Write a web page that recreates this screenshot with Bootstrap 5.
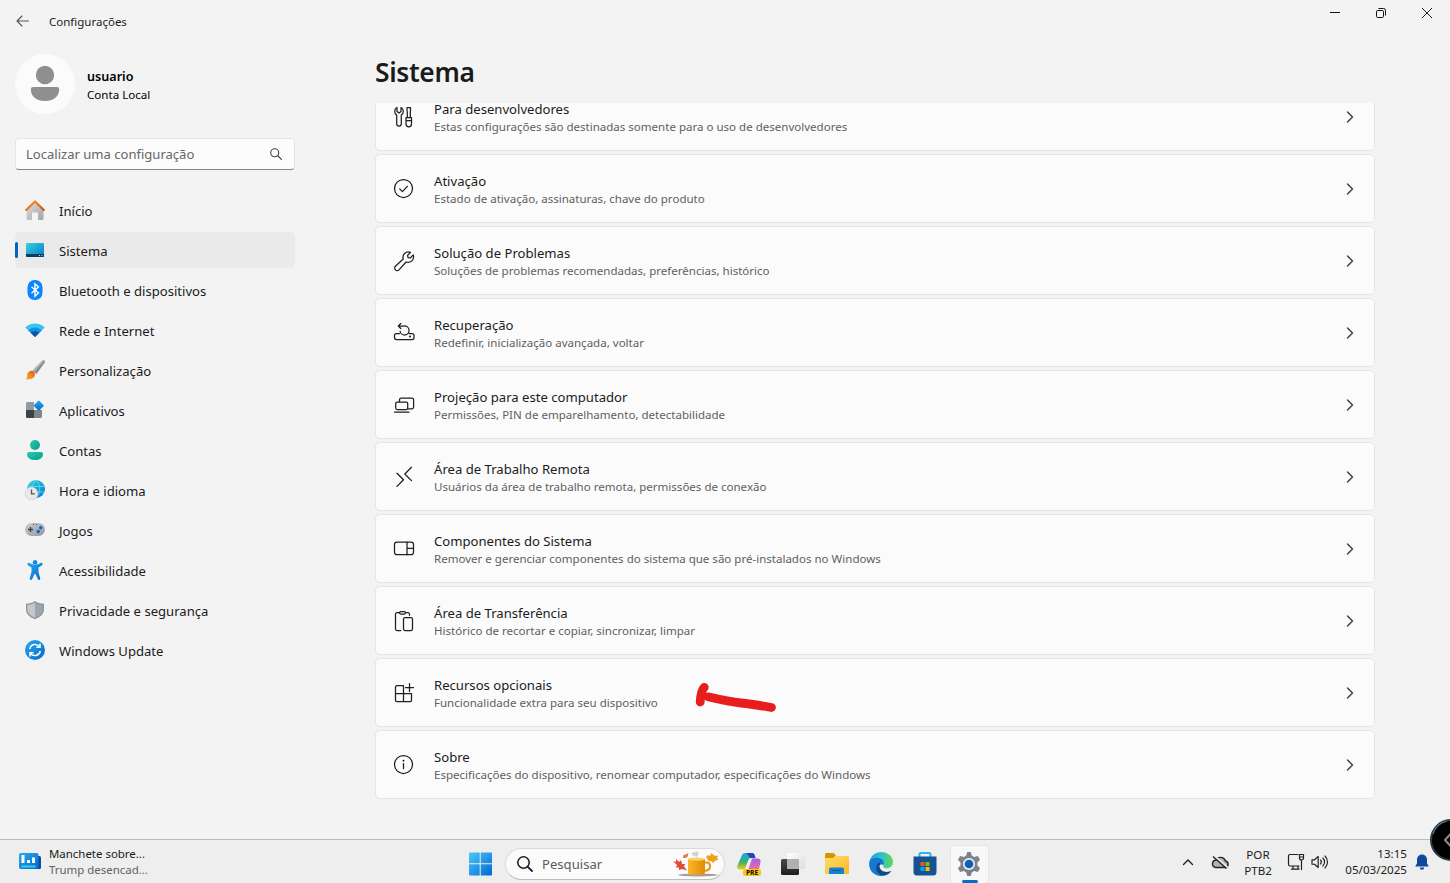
<!DOCTYPE html>
<html lang="pt-BR">
<head>
<meta charset="utf-8">
<title>Configurações</title>
<link href="https://cdn.jsdelivr.net/npm/bootstrap@5.3.0/dist/css/bootstrap.min.css" rel="stylesheet">
<style>
body{font-family:"Noto Sans","Open Sans",sans-serif;background:#f3f3f3;color:#1b1b1b;width:1450px;height:883px;overflow:hidden;font-size:13.12px;line-height:20px}
svg{display:block;flex:none;overflow:visible}
.ln{fill:none;stroke:#1f1f1f;stroke-width:1.25;stroke-linecap:round;stroke-linejoin:round}
.winbar{height:44px;padding-left:16px}
.wintitle{font-size:11.5px;margin-left:19px}
.winctl{width:46px;height:26px}
.side{width:375px;padding:10px 0 0 15px}
.pic{width:60px;height:60px;background:#fbfbfb}
.who{font-size:12.6px;line-height:18px;color:#000}
.who b{font-weight:600}
.who small{font-size:11.6px;display:block}
.find{width:280px;height:32px;margin-top:24px;border:1px solid #e4e4e4;border-bottom-color:#868686;border-radius:4px;background:#fcfcfc;color:#666;padding:0 12px 0 10px;font-size:13.05px}
.menu{width:280px;gap:4px;margin-top:22px}
.menu .nav-link{height:36px;padding:0 0 0 10px;color:#1b1b1b;border-radius:5px;gap:14px;font-size:13.1px}
.menu .nav-link span{padding-top:1px}
.menu .nav-link.active{background:#eaeaea;position:relative}
.menu .nav-link.active::before{content:"";position:absolute;left:0;top:10px;width:3px;height:16px;border-radius:2px;background:#0067c0}
.pagetitle{font-size:26.4px;font-weight:600;letter-spacing:-.35px;line-height:36px;height:49px;margin:0}
.content{width:1000px;padding-top:10px}
.clip{overflow:hidden}
.stack{gap:3px;margin-top:-21px}
.opt{height:69px;border:1px solid #e5e5e5;border-radius:5px;background:#fbfbfb;color:inherit;padding:0 20px 0 17px}
.opt .lbl{margin-left:19px}
.opt .lbl small{display:block;font-size:11.54px;line-height:16px;color:#5f5f5f}
.mark-red{position:absolute;left:314px;top:21px}
.taskbar{height:44px;border-top:1px solid #bcbcbc;background:#eee;display:grid;grid-template-columns:468px 524px 1fr}
.news{padding-left:18px;gap:8px;font-size:11.45px;line-height:16px}
.apps>*{position:static}
.pill{width:220px;height:32px;margin:0 2px 0 13px;border:1px solid #d9d9d9;border-bottom-color:#bdbdbd;border-radius:16px;background:#fbfbfb;color:#5b5b5b;padding:0 5px 0 11px}
.tile{width:44px;height:44px}
.tile.on div{width:39px;height:39px;border-radius:4px;background:#f8f8f8;border:1px solid #e6e6e6;position:relative}
.tile.on div::after{content:"";position:absolute;left:11px;bottom:0;width:16px;height:3px;border-radius:2px;background:#0a6cc8}
.tray{padding-right:20px;font-size:11.6px;line-height:16px}
.bubble{position:absolute;left:1430px;top:819px}
</style>
</head>
<body class="d-flex flex-column">
<svg width="0" height="0" class="position-absolute">
<defs>
<linearGradient id="gOr" x1="0" y1="0" x2="1" y2="1"><stop offset="0" stop-color="#f99a1c"/><stop offset="1" stop-color="#d2500f"/></linearGradient>
<linearGradient id="gBr" x1="1" y1="0" x2="0" y2="1"><stop offset="0" stop-color="#e8590c"/><stop offset="1" stop-color="#ffb22e"/></linearGradient>
<linearGradient id="gGy" x1="0" y1="0" x2="1" y2="1"><stop offset="0" stop-color="#dedede"/><stop offset="1" stop-color="#a5a5a8"/></linearGradient>
<linearGradient id="gPad" x1="0" y1="0" x2="1" y2="1"><stop offset="0" stop-color="#c9ced3"/><stop offset="1" stop-color="#8f979f"/></linearGradient>
<linearGradient id="gSys" x1="0" y1="0" x2="1" y2="1"><stop offset="0" stop-color="#33d6dd"/><stop offset="1" stop-color="#0b74cc"/></linearGradient>
<linearGradient id="gBl" x1="0" y1="0" x2="1" y2="1"><stop offset="0" stop-color="#28aaec"/><stop offset="1" stop-color="#0469cf"/></linearGradient>
<linearGradient id="gTe" x1="0" y1="0" x2="1" y2="1"><stop offset="0" stop-color="#29ccb0"/><stop offset="1" stop-color="#0d9c86"/></linearGradient>
<linearGradient id="gWin" x1="0" y1="0" x2="1" y2="1"><stop offset="0" stop-color="#4cc9fb"/><stop offset="1" stop-color="#0068d0"/></linearGradient>
<linearGradient id="gDk" x1="0" y1="0" x2="0" y2="1"><stop offset="0" stop-color="#4a4a4a"/><stop offset="1" stop-color="#1d1d1d"/></linearGradient>
<linearGradient id="gLt" x1="0" y1="0" x2="1" y2="1"><stop offset="0" stop-color="#ffffff"/><stop offset="1" stop-color="#dcdcdc"/></linearGradient>
<linearGradient id="gFo" x1="0" y1="0" x2="1" y2="1"><stop offset="0" stop-color="#ffdd6c"/><stop offset="1" stop-color="#f8b91f"/></linearGradient>
<linearGradient id="gEd" x1="0" y1="0" x2="1" y2="0"><stop offset="0" stop-color="#1c9de0"/><stop offset=".5" stop-color="#2cc3d2"/><stop offset="1" stop-color="#6ad64a"/></linearGradient>
<linearGradient id="gMug" x1="0" y1="0" x2="1" y2="0"><stop offset="0" stop-color="#f8b62a"/><stop offset="1" stop-color="#e58b0a"/></linearGradient>
<linearGradient id="gC1" x1="0" y1="0" x2="0" y2="1"><stop offset="0" stop-color="#1fa1ec"/><stop offset=".55" stop-color="#37b36a"/><stop offset="1" stop-color="#f6c81d"/></linearGradient>
<linearGradient id="gC2" x1="0" y1="0" x2="0" y2="1"><stop offset="0" stop-color="#a45df0"/><stop offset="1" stop-color="#f5718b"/></linearGradient>
<symbol id="chev" viewBox="0 0 8 12"><path class="ln" d="M1.500 1 6.500 6 1.500 11" style="stroke:#3c3c3c;stroke-width:1.400"/></symbol>
</defs>
</svg>

<header class="winbar d-flex align-items-center">
<svg width="14" height="12" viewBox="0 0 14 12" style="margin-top:-2px"><path class="ln" d="M12.500 6H1M6 1 1 6l5 5" style="stroke:#555;stroke-width:1.100"/></svg>
<span class="wintitle">Configurações</span>
<div class="ms-auto d-flex align-self-start">
<div class="winctl d-flex align-items-center justify-content-center"><svg width="10" height="10"><path d="M0 4.500h10" stroke="#111"/></svg></div>
<div class="winctl d-flex align-items-center justify-content-center"><svg width="10" height="10" fill="none" stroke="#111"><rect x=".5" y="2.500" width="7" height="7" rx="1.200"/><path d="M2.500.5h5a2 2 0 0 1 2 2v5"/></svg></div>
<div class="winctl d-flex align-items-center justify-content-center"><svg width="10" height="10"><path d="M0 0 10 10M10 0 0 10" stroke="#222"/></svg></div>
</div>
</header>

<div class="d-flex flex-grow-1 overflow-hidden">
<aside class="side flex-shrink-0">
<div class="d-flex align-items-center">
<div class="pic rounded-circle d-flex justify-content-center"><svg width="28" height="36" style="margin-top:12px" fill="#8f8f8f"><circle cx="14" cy="9" r="9.200"/><path d="M2 21h24a2.200 2.200 0 0 1 2.200 2.200c0 2.800-.8 5.500-3 7.800-2.600 2.700-6 4-11.200 4s-8.600-1.300-11.200-4c-2.200-2.300-3-5-3-7.800A2.200 2.200 0 0 1 2 21z"/></svg></div>
<div class="who ms-2 ps-1 pt-1"><b>usuario</b><small>Conta Local</small></div>
</div>
<div class="find d-flex align-items-center justify-content-between"><span>Localizar uma configuração</span><svg width="12" height="12"><circle cx="4.700" cy="4.700" r="4" class="ln" style="stroke:#444;stroke-width:1.100"/><path class="ln" d="m7.800 7.800 3.600 3.600" style="stroke:#444"/></svg></div>
<nav class="nav flex-column menu">
<a class="nav-link d-flex align-items-center"><svg width="20" height="20"><path d="M1.500 9 10 2l8.500 7v9.500q0 1.500-1.500 1.500h-4v-7.500H7V20H3q-1.500 0-1.500-1.500z" fill="url(#gGy)"/><path d="M1.200 10 10 1.500 18.800 10" fill="none" stroke="url(#gOr)" stroke-width="2.300" stroke-linecap="round" stroke-linejoin="round"/></svg><span>Início</span></a>
<a class="nav-link active d-flex align-items-center"><svg width="20" height="20"><rect x="1" y="3" width="18" height="14" rx="1.200" fill="url(#gSys)"/><path d="M1 14h18v2q0 1-1 1H2q-1 0-1-1z" fill="#0b3f62"/><path d="M14 15.500h1M16.500 15.500h1" stroke="#bfe3f3"/></svg><span>Sistema</span></a>
<a class="nav-link d-flex align-items-center"><svg width="20" height="20"><rect x="2.500" y="0" width="15" height="20" rx="7.200" fill="#0a84ff"/><path d="m6.500 6.800 7 6.200-3.500 3.200V3.800l3.500 3.200-7 6.200" fill="none" stroke="#fff" stroke-width="1.400"/></svg><span>Bluetooth e dispositivos</span></a>
<a class="nav-link d-flex align-items-center"><svg width="20" height="20"><path d="M.3 7.500C5.500 2 14.500 2 19.700 7.500L10 17z" fill="#35c5f1"/><path d="M3.300 10.400c3.800-4 9.600-4 13.400 0L10 17z" fill="#1492df"/><path d="M5.900 13c2.300-2.400 5.900-2.400 8.200 0L10 17z" fill="#0b55a5"/></svg><span>Rede e Internet</span></a>
<a class="nav-link d-flex align-items-center"><svg width="20" height="20"><path d="M19.500.6c.8.900.3 2-.4 3L11.500 14l-4-3.500L16.500 1.500c1-1 2.200-1.600 3-.9z" fill="#858c94"/><path d="M19.300.6 9 12 7.500 10.500 16.500 1.500c1-1 2-1.600 2.800-.9z" fill="#b3b9bf"/><path d="M6 10.800c2.500-.3 4.300 1.500 4 4C9.600 18 6 20 .5 19.400c1.800-1.200 1.300-2.400 1.800-4.900.4-2 1.700-3.500 3.700-3.700z" fill="url(#gBr)"/></svg><span>Personalização</span></a>
<a class="nav-link d-flex align-items-center"><svg width="20" height="20"><path d="M1 3.500Q1 2 2.500 2H9v8H1z" fill="#9299a1"/><path d="M1 10h8v8H2.500Q1 18 1 16.500z" fill="#3d4248"/><path d="M9 10h8v6.500q0 1.500-1.500 1.500H9z" fill="#7d848c"/><rect x="10" y="1.800" width="7.600" height="7.600" rx="1" transform="rotate(45 13.800 5.600)" fill="url(#gBl)"/></svg><span>Aplicativos</span></a>
<a class="nav-link d-flex align-items-center"><svg width="20" height="20" fill="url(#gTe)"><circle cx="10" cy="5" r="5"/><path d="M4 12h12q2 0 2 2c0 4-3.500 6-8 6s-8-2-8-6q0-2 2-2z"/></svg><span>Contas</span></a>
<a class="nav-link d-flex align-items-center"><svg width="20" height="20"><circle cx="11" cy="9" r="9" fill="url(#gSys)"/><path d="M2.500 6.500h17M3 12h16.500M11 0C6 5 6 13 11 18M11 0c5 5 5 13 0 18" fill="none" stroke="#5bdcf4" stroke-width=".9"/><circle cx="6.500" cy="13.500" r="6.400" fill="#e9e9ea" stroke="#bfc2c6" stroke-width=".5"/><path d="M6.500 9.500v4.300h3.300" fill="none" stroke="#555" stroke-width="1.300"/></svg><span>Hora e idioma</span></a>
<a class="nav-link d-flex align-items-center"><svg width="20" height="20"><rect x="0" y="3" width="20" height="13" rx="6.500" fill="url(#gPad)"/><path d="M3 9.500h5M5.500 7v5" stroke="#3e4348" stroke-width="1.300"/><circle cx="15.700" cy="7.700" r="1.700" fill="#0c66bd"/><circle cx="13.300" cy="11.500" r="1.700" fill="#0c66bd"/><path d="M8 4.500h1M11 4.500h1" stroke="#555"/></svg><span>Jogos</span></a>
<a class="nav-link d-flex align-items-center"><svg width="20" height="20" fill="url(#gBl)"><circle cx="10" cy="2.300" r="2.300"/><path d="M2.500 3.500c.5-.9 1.300-.7 2-.4 3.500 2 7.500 2 11 0 .7-.3 1.500-.5 2 .4.400.8 0 1.500-.7 1.900L13.500 7.500V12l1.700 6.300c.2.800 0 1.500-.8 1.700-.8.100-1.300-.3-1.600-1L10.500 14h-1L7.200 19c-.3.700-.8 1.100-1.600 1-.8-.2-1-.9-.8-1.700L6.500 12V7.500L3.200 5.400c-.7-.4-1.100-1.100-.7-1.900z"/></svg><span>Acessibilidade</span></a>
<a class="nav-link d-flex align-items-center"><svg width="20" height="20"><path d="M10 1c2.500 1.800 5.500 2.500 9 2.700V9c0 5-3.500 8-9 10.200C4.500 17 1 14 1 9V3.700C4.500 3.500 7.500 2.800 10 1z" fill="#8d939a"/><path d="M10 2.500V17.700C5.500 15.800 2.300 13 2.300 9V4.900C5.300 4.600 7.700 4 10 2.500z" fill="#c3c8cd"/><path d="M10 2.500c2.300 1.500 4.700 2.100 7.700 2.400V9c0 4-3.200 6.800-7.700 8.700z" fill="#9fa5ac"/></svg><span>Privacidade e segurança</span></a>
<a class="nav-link d-flex align-items-center"><svg width="20" height="20"><circle cx="10" cy="10" r="10" fill="url(#gBl)"/><path d="M4.700 9A5.500 5.500 0 0 1 14.500 6.600M15.300 11A5.500 5.500 0 0 1 5.500 13.400M15 3.500V7.200H11.300M5 16.500V12.800H8.700" fill="none" stroke="#fff" stroke-width="1.500"/></svg><span>Windows Update</span></a>
</nav>
</aside>

<main class="content">
<h1 class="pagetitle">Sistema</h1>
<div class="clip">
<div class="stack d-flex flex-column">
<a class="opt text-decoration-none d-flex align-items-center"><svg width="22" height="22"><g class="ln"><path d="M4 1.500v4L6 7l2-1.500v-4c1.500.8 2.300 2.200 2.300 3.700 0 1.700-.8 3-2 3.900v8.700a2.300 2.300 0 0 1-4.600 0V9.100C2.500 8.200 1.700 6.900 1.700 5.200c0-1.500.8-2.900 2.300-3.700z"/><path d="M14 1.500h3.500v3l-.2 1.500v5.500h-3V6L14 4.500zM13 11.500h5.500v6.600a2.750 2.750 0 0 1-5.500 0zM13 14.500h5.500"/></g></svg><div class="lbl">Para desenvolvedores<small>Estas configurações são destinadas somente para o uso de desenvolvedores</small></div><svg class="ms-auto" width="8" height="12"><use href="#chev"/></svg></a>
<a class="opt text-decoration-none d-flex align-items-center"><svg width="22" height="22"><g class="ln"><circle cx="10.500" cy="10.500" r="9"/><path d="m6.700 10.900 2.700 2.700 5-5.200"/></g></svg><div class="lbl">Ativação<small>Estado de ativação, assinaturas, chave do produto</small></div><svg class="ms-auto" width="8" height="12"><use href="#chev"/></svg></a>
<a class="opt text-decoration-none d-flex align-items-center"><svg width="22" height="22"><path class="ln" d="M17.500 2.300 14.600 5.400l.4 2.200 2.200.4 3.100-3.100c1.100 3.500-1.200 7.500-5 7.500-.8 0-1.500-.1-2.200-.4L6 19.900a2.500 2.500 0 0 1-3.600-3.600L10.200 9C8.900 4.900 12.800.5 17.500 2.300z"/></svg><div class="lbl">Solução de Problemas<small>Soluções de problemas recomendadas, preferências, histórico</small></div><svg class="ms-auto" width="8" height="12"><use href="#chev"/></svg></a>
<a class="opt text-decoration-none d-flex align-items-center"><svg width="22" height="22"><g class="ln"><path d="M6.500 11.500H3.500a2 2 0 0 0-2 2V15.500a2 2 0 0 0 2 2H19a2 2 0 0 0 2-2v-2a2 2 0 0 0-2-2H16"/><path d="M5.300 4H11.500a4.500 4.500 0 1 1-4.400 5.300M7.800 1.500 5.300 4 7.800 6.500"/></g><circle cx="17" cy="14.500" r=".9"/></svg><div class="lbl">Recuperação<small>Redefinir, inicialização avançada, voltar</small></div><svg class="ms-auto" width="8" height="12"><use href="#chev"/></svg></a>
<a class="opt text-decoration-none d-flex align-items-center"><svg width="22" height="22"><g class="ln"><rect x="2.700" y="8" width="12" height="7.500" rx="1.500"/><path d="M6.500 7.700V5.800A1.800 1.800 0 0 1 8.300 4H18.800A1.800 1.800 0 0 1 20.600 5.800v7.300a1.800 1.800 0 0 1-1.800 1.800H15M1.500 18.200H16"/></g></svg><div class="lbl">Projeção para este computador<small>Permissões, PIN de emparelhamento, detectabilidade</small></div><svg class="ms-auto" width="8" height="12"><use href="#chev"/></svg></a>
<a class="opt text-decoration-none d-flex align-items-center"><svg width="22" height="22"><path class="ln" d="m4 7.300 6.500 6.500L4 20.400M18.500 1.300 11.800 8l6.700 6.600"/></svg><div class="lbl">Área de Trabalho Remota<small>Usuários da área de trabalho remota, permissões de conexão</small></div><svg class="ms-auto" width="8" height="12"><use href="#chev"/></svg></a>
<a class="opt text-decoration-none d-flex align-items-center"><svg width="22" height="22"><g class="ln"><rect x="1.500" y="4" width="19" height="12.700" rx="2.500"/><path d="M14 4V16.700M14 10.300h6.500"/></g></svg><div class="lbl">Componentes do Sistema<small>Remover e gerenciar componentes do sistema que são pré-instalados no Windows</small></div><svg class="ms-auto" width="8" height="12"><use href="#chev"/></svg></a>
<a class="opt text-decoration-none d-flex align-items-center"><svg width="22" height="22"><g class="ln"><rect x="6.500" y="1.500" width="6" height="2.500" rx="1.200"/><path d="M6.200 2.700H4A1.500 1.500 0 0 0 2.500 4.200V19A1.500 1.500 0 0 0 4 20.500H7.700M12.700 2.700H15A1.500 1.500 0 0 1 16.500 4.200V5.300"/><rect x="10.500" y="7.500" width="9" height="13" rx="1.400"/></g></svg><div class="lbl">Área de Transferência<small>Histórico de recortar e copiar, sincronizar, limpar</small></div><svg class="ms-auto" width="8" height="12"><use href="#chev"/></svg></a>
<a class="opt text-decoration-none d-flex align-items-center position-relative"><svg width="22" height="22"><g class="ln"><path d="M10.500 3.700H3.800A1.300 1.300 0 0 0 2.500 5v13.200a1.300 1.300 0 0 0 1.300 1.300H17.200a1.300 1.300 0 0 0 1.300-1.300V11.500H2.500M10.500 3.700V19.500M16.500 1.500v8M12.500 5.500h8"/></g></svg><div class="lbl">Recursos opcionais<small>Funcionalidade extra para seu dispositivo</small></div><svg class="ms-auto" width="8" height="12"><use href="#chev"/></svg>
<svg class="mark-red" width="92" height="34" viewBox="690 680 92 34"><path d="M704.300 687.300Q700.700 691 700.200 702M708 696.800Q730 702 741 703T771.500 707.500" fill="none" stroke="#e81e1e" stroke-width="8.800" stroke-linecap="round" stroke-linejoin="round"/></svg></a>
<a class="opt text-decoration-none d-flex align-items-center"><svg width="22" height="22"><g class="ln"><circle cx="10.500" cy="10.500" r="9"/><path d="M10.500 9.500v5.200"/></g><circle cx="10.500" cy="6.700" r=".9"/></svg><div class="lbl">Sobre<small>Especificações do dispositivo, renomear computador, especificações do Windows</small></div><svg class="ms-auto" width="8" height="12"><use href="#chev"/></svg></a>
</div>
</div>
</main>
</div>

<footer class="taskbar">
<div class="news d-flex align-items-center"><svg width="23" height="18"><rect x="11" y="3" width="12" height="13" rx="1.500" fill="#0c4d9b"/><rect x="1" y="0" width="19.500" height="16" rx="2" fill="url(#gBl)"/><path d="M3.500 13.500h14" stroke="#26d6ef" stroke-width="2"/><path d="M5 2v8M10.500 7v3M15.500 4.500V10" stroke="#fff" stroke-width="3"/></svg><div>Manchete sobre...<br><span style="color:#626262">Trump desencad...</span></div></div>
<div class="apps d-flex align-items-center pt-0 mt-1" style="height:40px">
<svg width="24" height="24" fill="url(#gWin)"><path d="M2 .5h9.700v10.700H1V1.500a1 1 0 0 1 1-1zM12.700.5h10.300a1 1 0 0 1 1 1v9.700H12.700zM1 12.200h10.700V23.500H2a1 1 0 0 1-1-1zM12.700 12.200H24V22.500a1 1 0 0 1-1 1H12.700z"/></svg>
<div class="pill d-flex align-items-center"><svg width="16" height="16"><circle cx="6.500" cy="6.500" r="5.700" fill="none" stroke="#222" stroke-width="1.600"/><path d="m10.800 10.800 4.200 4.200" stroke="#222" stroke-width="1.900" stroke-linecap="round"/></svg><span style="margin-left:9px">Pesquisar</span>
<svg class="ms-auto" width="46" height="26"><ellipse cx="25" cy="24" rx="20" ry="1.400" fill="#a79c9a"/><path d="m0 10 3 1 0-3 3 3 2-2 1 4 3 0-1 2.500 3 4-5-1.500-3 1 0-2.500-3 0 1-2.500z" fill="#dc4c39"/><path d="m10 7 .5-3 2-.5L15.500 2l-.8 3.500-2 1.500z" fill="#e3793a"/><path d="m33 6 2-2 2 1 1-3 2.500 2L43 5l2.500-.5L44 7l1.500 2-3 .5L40 12l-2-2-2 .5z" fill="#eda21c"/><path d="M19 4c-1-2 1-3 3-3 2-1 4 0 3.500 2S24 4 24 6z" fill="#d2d2d2"/><path d="M31 11.500h2.500q3.500 0 3.500 4t-6 4.500" fill="none" stroke="#e99b18" stroke-width="2.200"/><path d="M15 8h17v13q0 2.700-3 2.700H18q-3 0-3-2.700z" fill="url(#gMug)"/><ellipse cx="23.500" cy="8.200" rx="8.500" ry="1.600" fill="#f9d367"/></svg></div>
<div class="tile d-flex align-items-center justify-content-center"><svg width="24" height="24"><path d="M5 3Q5.900 1 8 1h7q2 0 2.600 2l.8 3H14q-2 0-2.800 2.200L8.500 15.500q-.6 1.900-2.500 1.900H3q-3.500 0-2.600-3.900z" fill="url(#gC1)"/><path d="M9.500 1H15q2 0 2.600 2l.9 3H13z" fill="#2046bc"/><path d="M15 6.500h5.500q3.500 0 3 3.500L22.300 16q-.7 2.500-3.500 2.500H9q2 0 2.700-2z" fill="url(#gC2)"/><rect x="6" y="17" width="18" height="7" rx="2" fill="#fbc61b"/><text x="15" y="22.900" text-anchor="middle" font-size="6.600" font-weight="800" fill="#1f1a05">PRE</text></svg></div>
<div class="tile d-flex align-items-center justify-content-center"><svg width="24" height="24"><rect x="0" y="7" width="18" height="16" rx="1.500" fill="url(#gDk)"/><rect x="6" y="1" width="18" height="16" rx="1.500" fill="url(#gLt)"/><path d="M6 7h12v10H7.500Q6 17 6 15.500z" fill="#b0b0b0"/></svg></div>
<div class="tile d-flex align-items-center justify-content-center"><svg width="24" height="24"><path d="M0 2.500Q0 1 1.500 1H8q1 0 1.700 1L11 4v4H0z" fill="#d99200"/><path d="M0 6h8l2-2h12.500Q24 4 24 5.500v15Q24 22 22.500 22h-21Q0 22 0 20.500z" fill="url(#gFo)"/><path d="M4 17.500Q4 15.500 6 15.500h11q2 0 2 2V22H4z" fill="#1480cf"/><path d="M7.500 18.500h8" stroke="#095793"/></svg></div>
<div class="tile d-flex align-items-center justify-content-center"><svg width="24" height="24"><path d="M.3 10C1.500 4 6.500 0 12 0c7 0 12 4.800 12 10 0 4-3 6.300-6.300 6.300-2.500 0-4.200-1-3.200-2.500C16 12 15 8.500 10.500 8 6 7 2 9 .3 10z" fill="url(#gEd)"/><path d="M.2 10.200C2 5.500 9 4.500 13 7.500c2 1.500 2.500 4 1.500 5.700C12 11 8 14 9.500 18c1 3 4 5 6.500 5.200C8 26-.9 20 .2 10.200z" fill="#1479cf"/><path d="M9.200 11c-4 4-2 11.500 5 12.600 3 .2 6.500-1.600 8.300-4.800-4 2-11 1.700-12-4.300-.1-1.500.5-2.700 1.300-3.700z" fill="#114a8b"/></svg></div>
<div class="tile d-flex align-items-center justify-content-center"><svg width="24" height="24"><path d="M6.500 6V2.200Q6.500 1 7.700 1h8.600q1.200 0 1.200 1.200V6" fill="none" stroke="#27b7ee" stroke-width="2"/><path d="M.5 4.500h23V20q0 3.500-3.500 3.500H4Q.5 23.500.5 20z" fill="#14538f"/><path d="M7.500 10h4v4h-4z" fill="#f25022"/><path d="M12.500 10h4v4h-4z" fill="#7fba00"/><path d="M7.500 15h4v4h-4z" fill="#00a4ef"/><path d="M12.500 15h4v4h-4z" fill="#ffb900"/></svg></div>
<div class="tile on d-flex align-items-center justify-content-center"><div class="d-flex align-items-center justify-content-center"><svg width="24" height="24"><path d="M10.200 0h3.600l1 3.600 2.300 1.300 3.700-1 2.300 3.800-2.600 2.800v3l2.600 2.800-2.300 3.800-3.700-1-2.300 1.300-1 3.600h-3.600l-1-3.600-2.300-1.300-3.700 1L.9 16.300 3.500 13.500v-3L.9 7.700l2.300-3.800 3.700 1 2.300-1.300z" fill="#7b848d"/><circle cx="12" cy="12" r="6" fill="#e9edf0"/><circle cx="12" cy="12" r="4.300" fill="#0f5fb5"/></svg></div></div>
</div>
<div class="tray d-flex align-items-center justify-content-end">
<svg width="12" height="8" style="margin-right:17px"><path class="ln" d="M1.500 6.500 6 2l4.500 4.500" style="stroke-width:1.400"/></svg>
<svg width="18" height="18" style="margin-right:14px"><path d="M4.500 14.500h9.700a3.300 3.300 0 0 0 .3-6.500A5.200 5.200 0 0 0 5 7 3.800 3.800 0 0 0 4.500 14.500z" fill="#b4b4b4" stroke="#222" stroke-width="1.400"/><path d="m3.500 3 13 11.500" stroke="#eee" stroke-width="2"/><path d="m2 3.500 13.500 12" stroke="#222" stroke-width="1.400"/></svg>
<div class="text-center" style="width:30px;margin-right:14px;padding-top:2px">POR<br>PTB2</div>
<svg width="18" height="18" style="margin-right:6px"><g class="ln" style="stroke-width:1.200"><path d="M11 1.500H3A1.500 1.500 0 0 0 1.500 3v8.500A1.500 1.500 0 0 0 3 13h9M6 13v3M11 13v3M4.500 16.200H12M12.500 1.500h4V5a2 2 0 0 1-4 0zM14.500 7v9.500M12.500 4h4"/></g></svg>
<svg width="18" height="18" style="margin-right:14px"><g class="ln" style="stroke-width:1.150"><path d="M1 6.800h2.500L7.200 3.500v11L3.500 11.200H1zM9.500 7a3 3 0 0 1 0 4M11.800 5a5.500 5.500 0 0 1 0 8M14 3a8.500 8.500 0 0 1 0 12"/></g></svg>
<div class="text-end" style="width:64px;margin-right:7px">13:15<br>05/03/2025</div>
<svg width="16" height="16" fill="#0b4a9e"><path d="M8 .5a5 5 0 0 1 5 5V9.500l1.500 2.300v.7h-13v-.7L3 9.500v-4a5 5 0 0 1 5-5zM5.800 13.500h4.400a2.200 2.200 0 0 1-4.400 0z"/></svg>
</div>
</footer>
<svg class="bubble" width="20" height="42" style="overflow:hidden"><circle cx="21" cy="21" r="20" fill="#000" stroke="#303a40" stroke-width="2"/><path d="M3 15A19.500 19.500 0 0 1 17 2" fill="none" stroke="#4f8199" stroke-width="1.200"/><path d="m21 14.500-6 6.500 6 6.500" fill="none" stroke="#8c8c8c" stroke-width="2"/></svg>
<script src="https://cdn.jsdelivr.net/npm/bootstrap@5.3.0/dist/js/bootstrap.bundle.min.js"></script>
</body>
</html>
